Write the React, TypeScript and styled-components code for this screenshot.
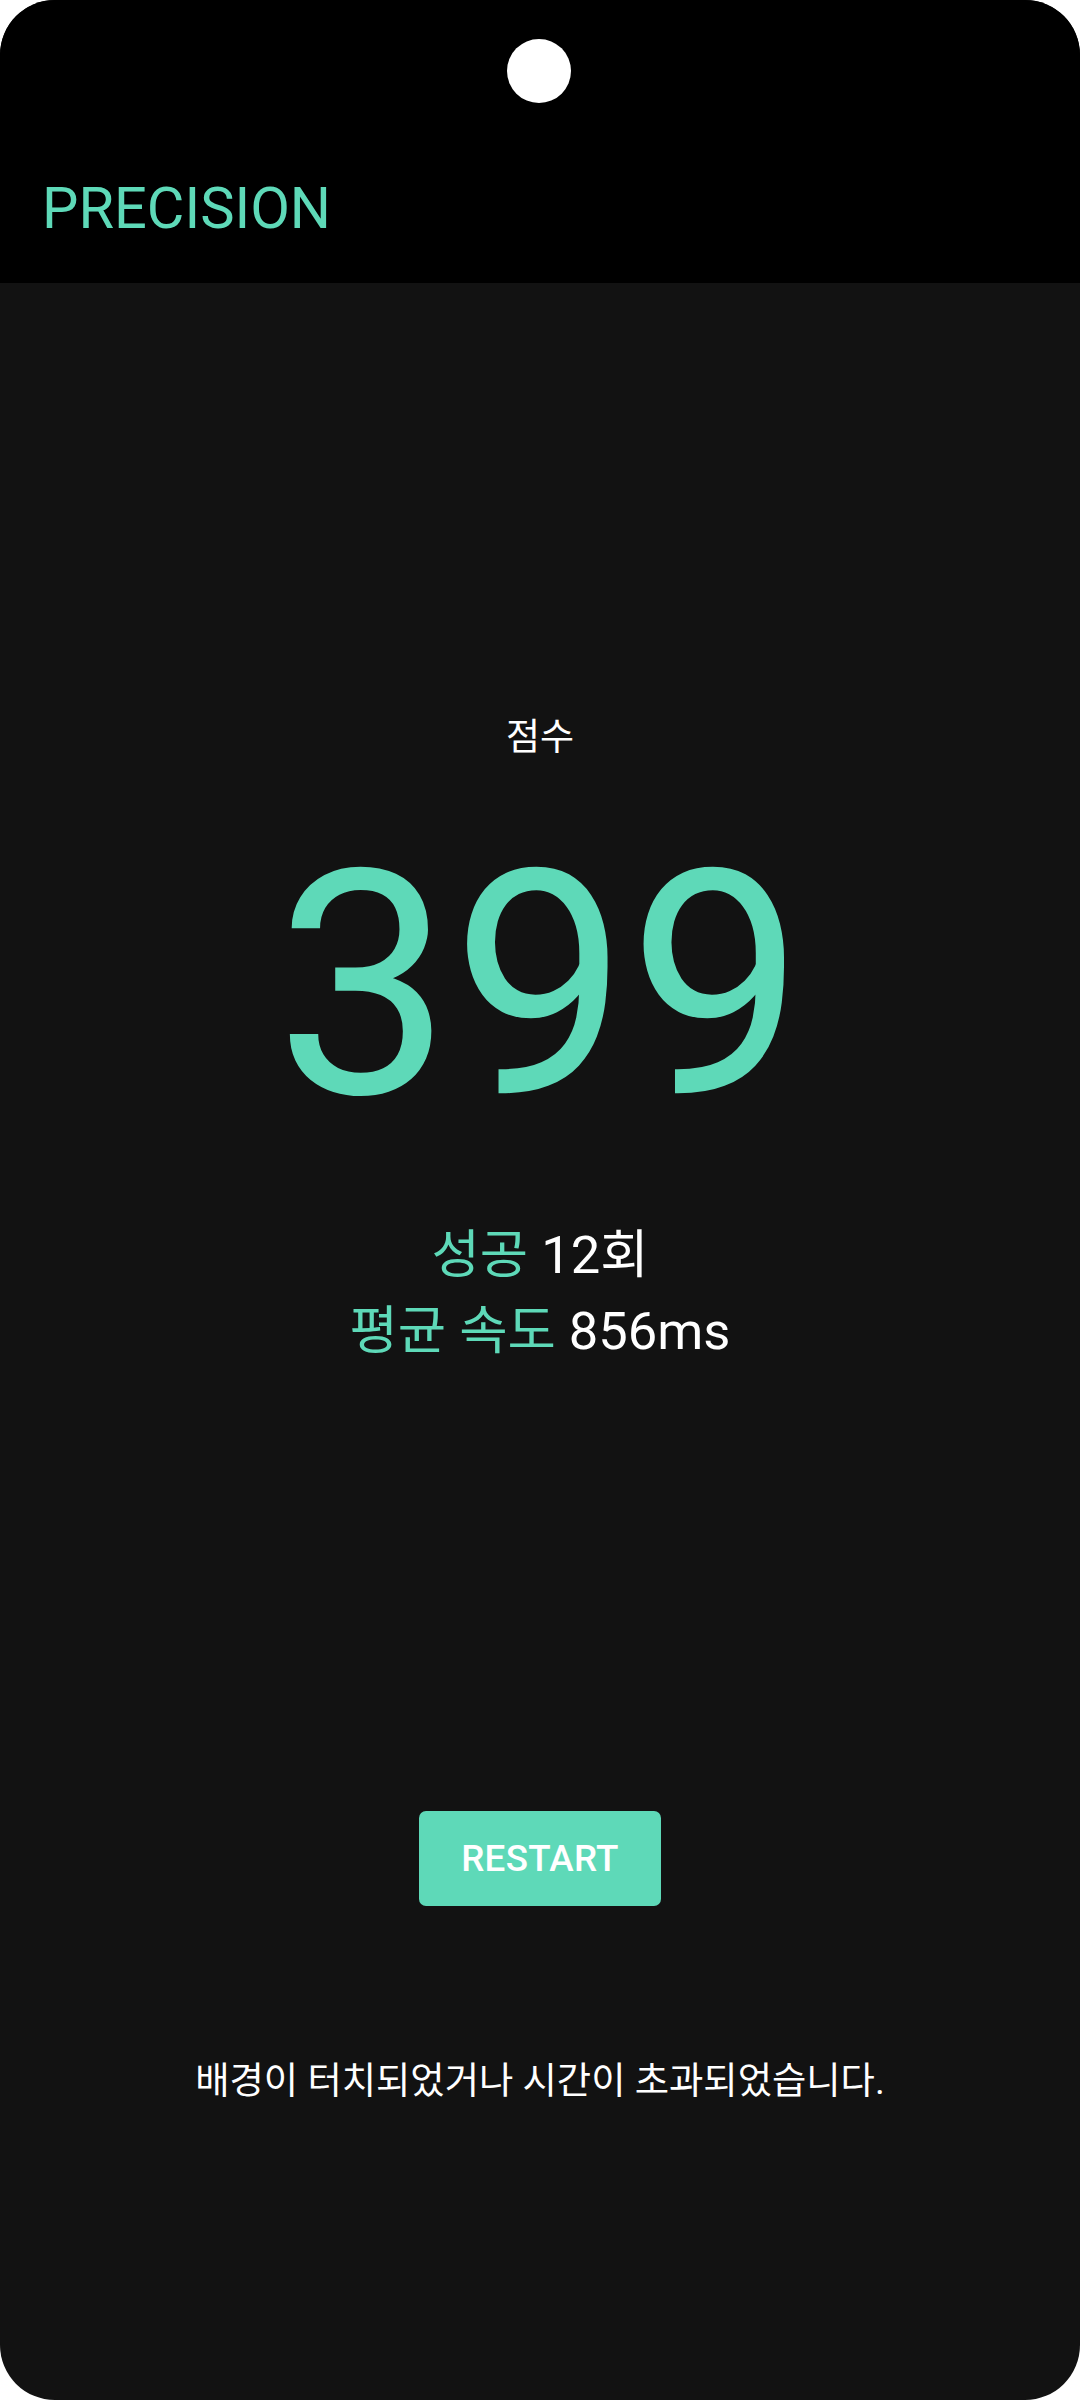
import React from "react";
import styled, { createGlobalStyle } from "styled-components";

const GlobalStyle = createGlobalStyle`
  html, body {
    margin: 0;
    padding: 0;
    background: #ffffff;
  }
  * { box-sizing: border-box; }
`;

const TEAL = "#5ED9B8";
const FONT = `"Roboto", "Noto Sans CJK KR", "Noto Sans", sans-serif`;

const Phone = styled.div`
  width: 1080px;
  height: 2400px;
  border-radius: 55px;
  overflow: hidden;
  background: #121212;
  display: flex;
  flex-direction: column;
  font-family: ${FONT};
`;

const Header = styled.header`
  position: relative;
  height: 283px;
  background: #000000;
  display: flex;
  align-items: flex-end;
  padding: 0 0 41px 42px;
`;

const CameraHole = styled.div`
  position: absolute;
  left: 507px;
  top: 39px;
  width: 64px;
  height: 64px;
  border-radius: 50%;
  background: #ffffff;
`;

const Title = styled.h1`
  margin: 0;
  font-family: ${FONT};
  font-weight: 400;
  font-size: 57.75px;
  line-height: 68px;
  color: ${TEAL};
`;

const Main = styled.main`
  flex: 1;
  display: flex;
  flex-direction: column;
  align-items: center;
`;

const ScoreLabel = styled.div`
  margin-top: 430px;
  font-size: 37px;
  line-height: 50px;
  color: #ffffff;
`;

const ScoreValue = styled.div`
  margin-top: 66px;
  font-size: 314px;
  line-height: 315px;
  color: ${TEAL};
`;

const Stats = styled.div`
  margin-top: 73px;
  display: flex;
  flex-direction: column;
  align-items: center;
`;

const StatLine = styled.div`
  font-size: 52.5px;
  line-height: 76px;
  color: #ffffff;
  white-space: pre;
`;

const Accent = styled.span`
  color: ${TEAL};
`;

const RestartButton = styled.button`
  margin-top: 442px;
  width: 242px;
  height: 95px;
  border: none;
  border-radius: 7px;
  background: ${TEAL};
  color: #ffffff;
  font-family: ${FONT};
  font-weight: 500;
  font-size: 36.75px;
  letter-spacing: 0.3px;
  display: flex;
  align-items: center;
  justify-content: center;
  padding: 0;
  cursor: pointer;
`;

const Message = styled.p`
  margin: 150px 0 0;
  font-size: 37.3px;
  line-height: 50px;
  color: #ffffff;
`;

export default function App() {
  return (
    <>
      <GlobalStyle />
      <Phone>
        <Header>
          <CameraHole />
          <Title>PRECISION</Title>
        </Header>
        <Main>
          <ScoreLabel>점수</ScoreLabel>
          <ScoreValue>399</ScoreValue>
          <Stats>
            <StatLine>
              <Accent>성공</Accent> 12회
            </StatLine>
            <StatLine>
              <Accent>평균 속도</Accent> 856ms
            </StatLine>
          </Stats>
          <RestartButton>RESTART</RestartButton>
          <Message>배경이 터치되었거나 시간이 초과되었습니다.</Message>
        </Main>
      </Phone>
    </>
  );
}
